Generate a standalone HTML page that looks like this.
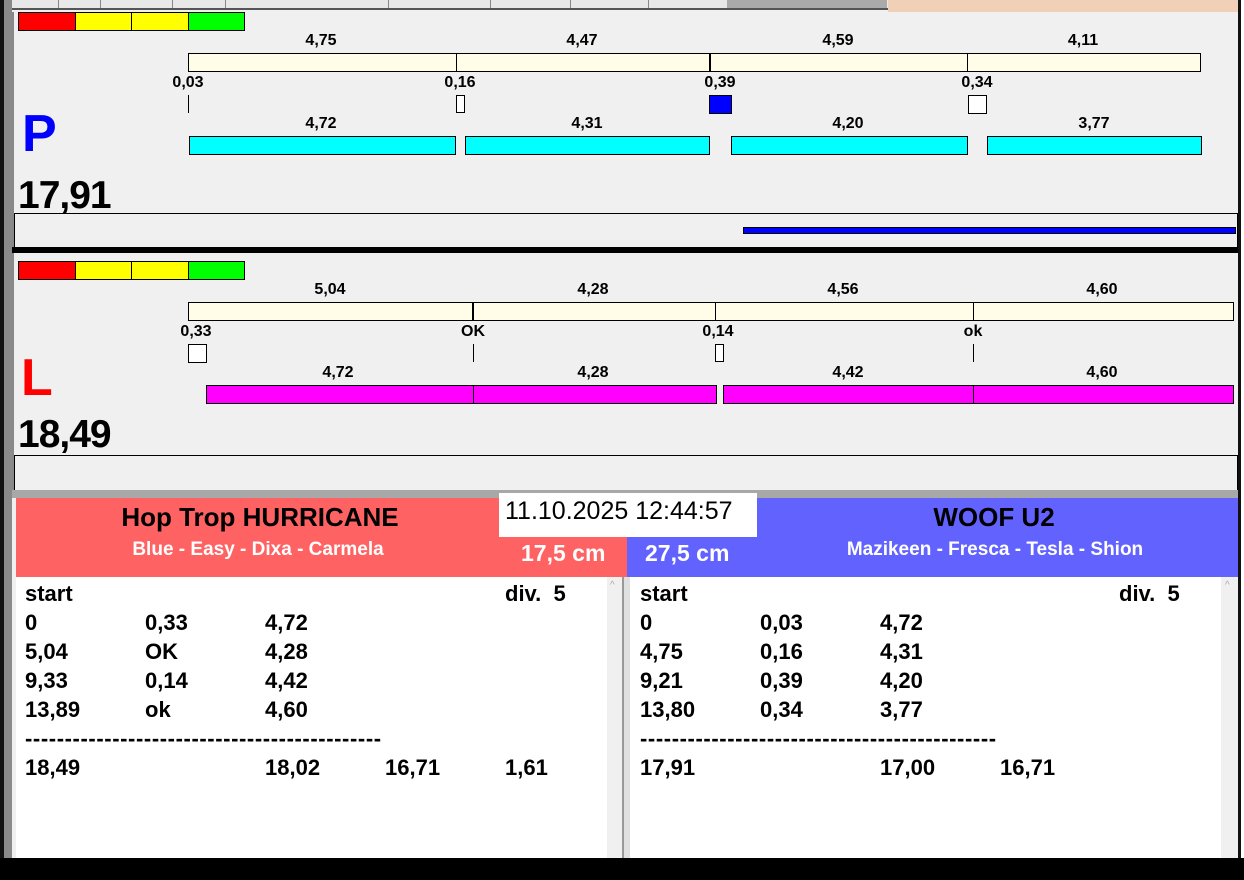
<!DOCTYPE html>
<html><head><meta charset="utf-8">
<style>
*{margin:0;padding:0;box-sizing:border-box}
body{width:1244px;height:880px;position:relative;background:#fff;font-family:"Liberation Sans",Arial,sans-serif;overflow:hidden}
.a{position:absolute}
.t{position:absolute;font-weight:bold;font-size:16px;color:#000;transform:translateX(-50%);white-space:nowrap;line-height:16px}
.cb{position:absolute;border:1px solid #000;background:#fffde8}
.cy{position:absolute;border:1px solid #000;background:#00ffff}
.mg{position:absolute;border:1px solid #000;background:#ff00ff}
.v{position:absolute;width:1px;background:#000}
.sq{position:absolute;border:1px solid #000;background:#fff}
.row{position:absolute;font-weight:bold;font-size:22px;line-height:24px;white-space:nowrap}
.dash{position:absolute;font-weight:bold;font-size:22px;line-height:24px;white-space:nowrap;letter-spacing:0.6px}
</style></head><body>
<div class="a" style="left:0;top:0;width:1240px;height:880px;background:#f0f0f0"></div>
<div class="a" style="left:0;top:0;width:4px;height:880px;background:#111"></div>
<div class="a" style="left:4px;top:0;width:8px;height:860px;background:#8a8a8a"></div>
<div class="a" style="left:1238px;top:0;width:3px;height:880px;background:#111"></div>
<div class="a" style="left:12px;top:0;width:876px;height:10px;background:#e8e8e8;border-bottom:2px solid #555"></div>
<div class="a" style="left:58px;top:0;width:1px;height:8px;background:#888"></div>
<div class="a" style="left:100px;top:0;width:1px;height:8px;background:#888"></div>
<div class="a" style="left:172px;top:0;width:1px;height:8px;background:#888"></div>
<div class="a" style="left:225px;top:0;width:1px;height:8px;background:#888"></div>
<div class="a" style="left:388px;top:0;width:1px;height:8px;background:#888"></div>
<div class="a" style="left:490px;top:0;width:1px;height:8px;background:#888"></div>
<div class="a" style="left:570px;top:0;width:1px;height:8px;background:#888"></div>
<div class="a" style="left:648px;top:0;width:1px;height:8px;background:#888"></div>
<div class="a" style="left:727px;top:0;width:160px;height:8px;background:#aaa"></div>
<div class="a" style="left:888px;top:0;width:350px;height:12px;background:#f0d0b6"></div>
<div class="a" style="left:12px;top:12px;width:2px;height:478px;background:#888"></div>

<div class="a" style="left:18px;top:12px;width:227px;height:19px;border:1px solid #000;display:flex">
<div style="flex:1;background:#f00;border-right:1px solid #000"></div><div style="flex:1;background:#ff0;border-right:1px solid #000"></div><div style="flex:1;background:#ff0;border-right:1px solid #000"></div><div style="flex:1;background:#0f0"></div></div>
<div class="t" style="left:321px;top:33px">4,75</div>
<div class="t" style="left:582px;top:33px">4,47</div>
<div class="t" style="left:838px;top:33px">4,59</div>
<div class="t" style="left:1083px;top:33px">4,11</div>
<div class="cb" style="left:188px;top:53px;width:1013px;height:19px"></div>
<div class="v" style="left:456px;top:53px;height:19px"></div>
<div class="v" style="left:709px;top:53px;height:19px;width:2px"></div>
<div class="v" style="left:967px;top:53px;height:19px"></div>
<div class="t" style="left:188px;top:75px">0,03</div>
<div class="t" style="left:460px;top:75px">0,16</div>
<div class="t" style="left:720px;top:75px">0,39</div>
<div class="t" style="left:977px;top:75px">0,34</div>
<div class="v" style="left:188px;top:95px;height:18px"></div>
<div class="sq" style="left:456px;top:95px;width:9px;height:18px"></div>
<div class="sq" style="left:709px;top:95px;width:23px;height:19px;background:#0000ff"></div>
<div class="sq" style="left:968px;top:95px;width:19px;height:19px"></div>
<div class="a" style="left:22px;top:106px;font-weight:bold;font-size:52px;color:#0000ff;line-height:56px">P</div>
<div class="t" style="left:321px;top:116px">4,72</div>
<div class="t" style="left:587px;top:116px">4,31</div>
<div class="t" style="left:848px;top:116px">4,20</div>
<div class="t" style="left:1094px;top:116px">3,77</div>
<div class="cy" style="left:189px;top:136px;width:267px;height:19px"></div>
<div class="cy" style="left:465px;top:136px;width:245px;height:19px"></div>
<div class="cy" style="left:731px;top:136px;width:237px;height:19px"></div>
<div class="cy" style="left:987px;top:136px;width:215px;height:19px"></div>
<div class="a" style="left:18px;top:174px;font-weight:bold;font-size:39px;line-height:44px;letter-spacing:-1px">17,91</div>
<div class="a" style="left:14px;top:213px;width:1224px;height:35px;border-top:1px solid #000;border-left:1px solid #000;border-right:1px solid #000"></div>
<div class="a" style="left:743px;top:227px;width:493px;height:7px;background:#0000ff;border:1px solid #000"></div>
<div class="a" style="left:12px;top:247px;width:1226px;height:6px;background:#000"></div>

<div class="a" style="left:18px;top:261px;width:227px;height:19px;border:1px solid #000;display:flex">
<div style="flex:1;background:#f00;border-right:1px solid #000"></div><div style="flex:1;background:#ff0;border-right:1px solid #000"></div><div style="flex:1;background:#ff0;border-right:1px solid #000"></div><div style="flex:1;background:#0f0"></div></div>
<div class="t" style="left:330px;top:282px">5,04</div>
<div class="t" style="left:593px;top:282px">4,28</div>
<div class="t" style="left:843px;top:282px">4,56</div>
<div class="t" style="left:1102px;top:282px">4,60</div>
<div class="cb" style="left:188px;top:302px;width:1046px;height:19px"></div>
<div class="v" style="left:472px;top:302px;height:19px;width:2px"></div>
<div class="v" style="left:715px;top:302px;height:19px"></div>
<div class="v" style="left:973px;top:302px;height:19px"></div>
<div class="t" style="left:196px;top:324px">0,33</div>
<div class="t" style="left:473px;top:324px">OK</div>
<div class="t" style="left:718px;top:324px">0,14</div>
<div class="t" style="left:973px;top:324px">ok</div>
<div class="sq" style="left:188px;top:344px;width:19px;height:19px"></div>
<div class="v" style="left:473px;top:344px;height:18px"></div>
<div class="sq" style="left:715px;top:344px;width:9px;height:18px"></div>
<div class="v" style="left:973px;top:344px;height:18px"></div>
<div class="a" style="left:21px;top:350px;font-weight:bold;font-size:52px;color:#ff0000;line-height:56px">L</div>
<div class="t" style="left:338px;top:365px">4,72</div>
<div class="t" style="left:593px;top:365px">4,28</div>
<div class="t" style="left:848px;top:365px">4,42</div>
<div class="t" style="left:1102px;top:365px">4,60</div>
<div class="mg" style="left:206px;top:385px;width:511px;height:19px"></div>
<div class="v" style="left:473px;top:385px;height:19px"></div>
<div class="mg" style="left:723px;top:385px;width:511px;height:19px"></div>
<div class="v" style="left:973px;top:385px;height:19px"></div>
<div class="a" style="left:18px;top:413px;font-weight:bold;font-size:39px;line-height:44px;letter-spacing:-1px">18,49</div>
<div class="a" style="left:14px;top:455px;width:1224px;height:36px;border-top:1px solid #000;border-left:1px solid #000;border-right:1px solid #000"></div>
<div class="a" style="left:12px;top:490px;width:1226px;height:8px;background:#a8a8a8"></div>

<div class="a" style="left:16px;top:498px;width:611px;height:79px;background:#ff6262"></div>
<div class="a" style="left:627px;top:498px;width:611px;height:79px;background:#6262ff"></div>
<div class="a" style="left:499px;top:493px;width:258px;height:44px;background:#fff"></div>
<div class="a" style="left:505px;top:496px;font-size:25px;line-height:30px;white-space:nowrap">11.10.2025 12:44:57</div>
<div class="t" style="left:260px;top:503px;font-size:26px;line-height:28px">Hop Trop HURRICANE</div>
<div class="t" style="left:258px;top:539px;font-size:19px;line-height:21px;color:#fff">Blue - Easy - Dixa - Carmela</div>
<div class="a" style="left:521px;top:540px;font-weight:bold;font-size:23px;line-height:26px;color:#fff;white-space:nowrap">17,5 cm</div>
<div class="a" style="left:645px;top:540px;font-weight:bold;font-size:23px;line-height:26px;color:#fff;white-space:nowrap">27,5 cm</div>
<div class="t" style="left:994px;top:503px;font-size:26px;line-height:28px">WOOF U2</div>
<div class="t" style="left:995px;top:539px;font-size:19px;line-height:21px;color:#fff">Mazikeen - Fresca - Tesla - Shion</div>

<div class="a" style="left:16px;top:577px;width:591px;height:283px;background:#fff"></div>
<div class="a" style="left:607px;top:577px;width:15px;height:283px;background:#f0f0f0"></div>
<div class="a" style="left:610px;top:580px;font-size:10px;color:#aaa">^</div>
<div class="a" style="left:622px;top:577px;width:8px;height:283px;background:#e0e0e0;border-left:2px solid #999"></div>
<div class="a" style="left:630px;top:577px;width:591px;height:283px;background:#fff"></div>
<div class="a" style="left:1221px;top:577px;width:17px;height:283px;background:#f0f0f0"></div>
<div class="a" style="left:1225px;top:580px;font-size:10px;color:#aaa">^</div>

<div class="row" style="left:25px;top:582px">start</div>
<div class="row" style="left:505px;top:582px">div.&nbsp; 5</div>
<div class="row" style="left:25px;top:611px">0</div><div class="row" style="left:145px;top:611px">0,33</div><div class="row" style="left:265px;top:611px">4,72</div>
<div class="row" style="left:25px;top:640px">5,04</div><div class="row" style="left:145px;top:640px">OK</div><div class="row" style="left:265px;top:640px">4,28</div>
<div class="row" style="left:25px;top:669px">9,33</div><div class="row" style="left:145px;top:669px">0,14</div><div class="row" style="left:265px;top:669px">4,42</div>
<div class="row" style="left:25px;top:698px">13,89</div><div class="row" style="left:145px;top:698px">ok</div><div class="row" style="left:265px;top:698px">4,60</div>
<div class="dash" style="left:25px;top:727px">---------------------------------------------</div>
<div class="row" style="left:25px;top:756px">18,49</div><div class="row" style="left:265px;top:756px">18,02</div><div class="row" style="left:385px;top:756px">16,71</div><div class="row" style="left:505px;top:756px">1,61</div>

<div class="row" style="left:640px;top:582px">start</div>
<div class="row" style="left:1119px;top:582px">div.&nbsp; 5</div>
<div class="row" style="left:640px;top:611px">0</div><div class="row" style="left:760px;top:611px">0,03</div><div class="row" style="left:880px;top:611px">4,72</div>
<div class="row" style="left:640px;top:640px">4,75</div><div class="row" style="left:760px;top:640px">0,16</div><div class="row" style="left:880px;top:640px">4,31</div>
<div class="row" style="left:640px;top:669px">9,21</div><div class="row" style="left:760px;top:669px">0,39</div><div class="row" style="left:880px;top:669px">4,20</div>
<div class="row" style="left:640px;top:698px">13,80</div><div class="row" style="left:760px;top:698px">0,34</div><div class="row" style="left:880px;top:698px">3,77</div>
<div class="dash" style="left:640px;top:727px">---------------------------------------------</div>
<div class="row" style="left:640px;top:756px">17,91</div><div class="row" style="left:880px;top:756px">17,00</div><div class="row" style="left:1000px;top:756px">16,71</div>

<div class="a" style="left:0;top:858px;width:1244px;height:22px;background:#000"></div>
</body></html>
